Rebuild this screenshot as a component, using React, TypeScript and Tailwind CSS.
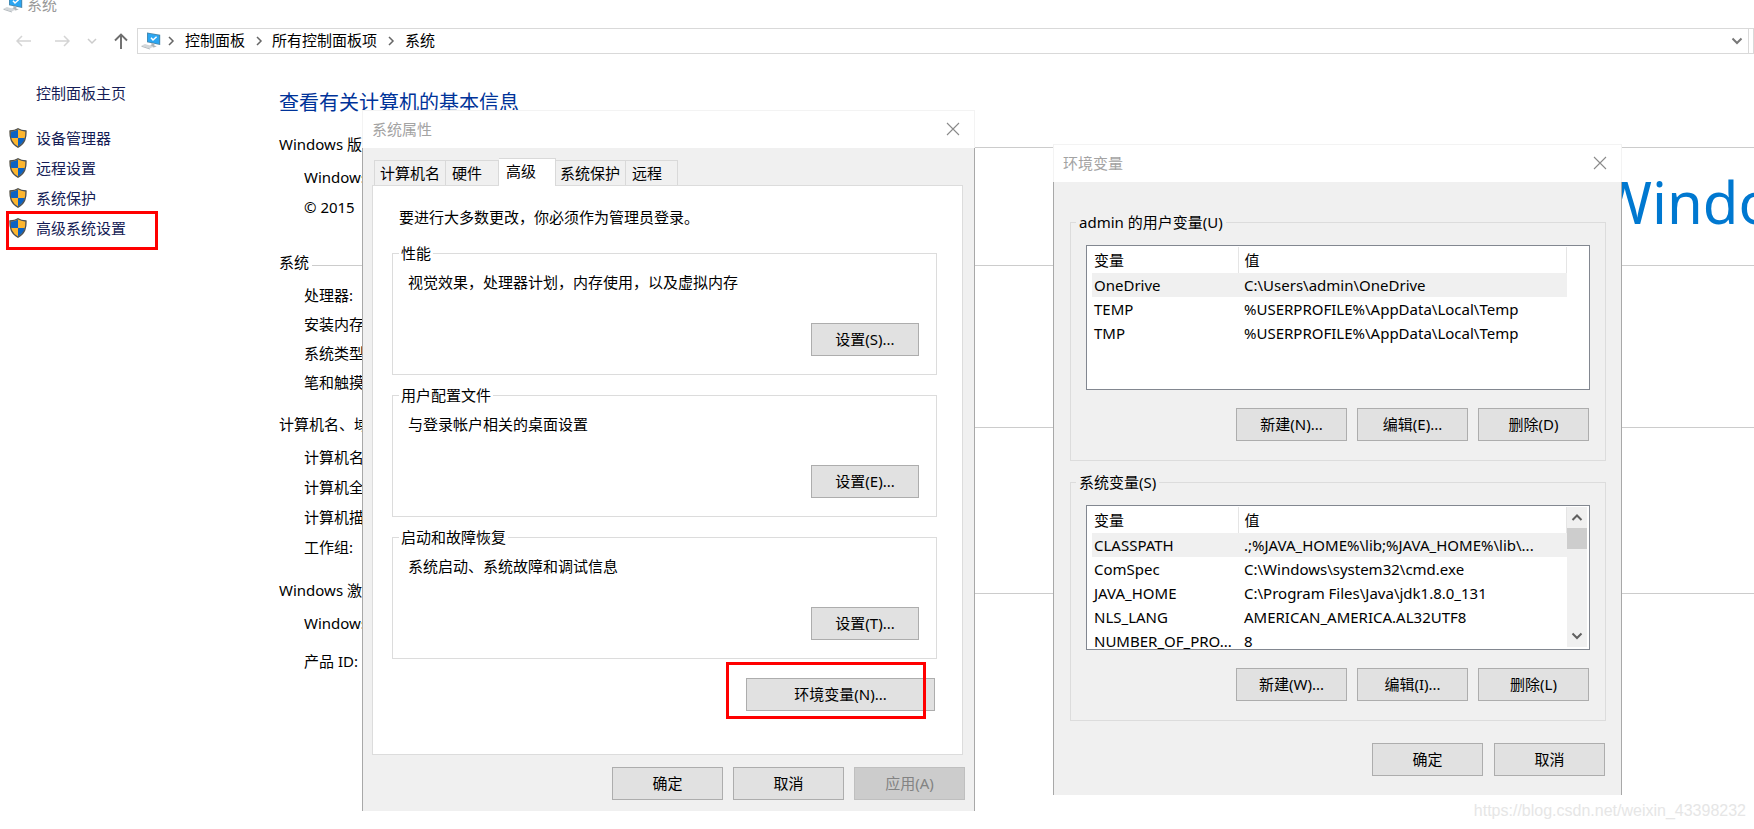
import React from 'react';

interface ButtonProps {
    children: React.ReactNode;
    className?: string;
    disabled?: boolean;
}

const DialogButton: React.FC<ButtonProps> = ({ children, className = 'w-[111px]', disabled = false }) => (
    <button
        type="button"
        disabled={disabled}
        className={`flex h-[33px] shrink-0 items-center justify-center border pb-[2px] ${
            disabled ? 'border-[#bfbfbf] bg-[#cccccc] text-[#838383]' : 'border-[#adadad] bg-[#e1e1e1]'
        } ${className}`}
    >
        {children}
    </button>
);

const ShieldIcon = () => (
    <svg className="h-5 w-[18px] shrink-0" viewBox="0 0 18 20">
        <path d="M9 0.6C6.8 2 4 2.6 0.8 2.8c-.2 7 1 12.6 8.2 16.6c7.2-4 8.4-9.6 8.2-16.6C14 2.6 11.2 2 9 .6z" fill="#fdb62f" />
        <path d="M9 1.4C6.8 2.7 4.2 3.2 1.6 3.4c0 2.4 0 4.600.7 6.600H9z" fill="#0b62c4" />
        <path d="M9 10h6.9c-.8 3.4-2.9 6.2-6.9 8.6z" fill="#0b62c4" />
        <path d="M9 0.8C6.8 2.2 4 2.8 1 3c-.2 7 1 12.2 8 16.2c7-4 8.2-9.2 8-16.2C14 2.8 11.2 2.2 9 .8z" fill="none" stroke="#4a4f55" strokeWidth="1.300" />
    </svg>
);

const ComputerIcon = () => (
    <svg className="h-5 w-5 shrink-0" viewBox="0 0 20 20">
        <path d="M6 1.500l13.200 2.300v10.200L6 11.200z" fill="#4a86a8" />
        <path d="M6.800 2.500l11.400 2v8.400L6.800 10.400z" fill="#2ba6f2" />
        <path d="M10 6.800l2 2.200 3.600-3.200" fill="none" stroke="#fff" strokeWidth="1.500" />
        <path d="M10.500 12l3 .8-.3 1.600 2.600.8-3 1.300-4.800-1.400 2.400-.8z" fill="#aeb4b8" />
        <path d="M0.500 14.800l3.400-1.800 8.600 2.600-3.600 2z" fill="#d3d7da" />
        <path d="M.5 14.800l8.400 2.800v.9L.5 15.700z" fill="#b2b8bc" />
    </svg>
);

const Chevron: React.FC<{ d: string; className?: string; strokeWidth?: number }> = ({ d, className = '', strokeWidth = 1.5 }) => (
    <svg className={`h-3 w-3 shrink-0 ${className}`} viewBox="0 0 12 12" fill="none" stroke="currentColor" strokeWidth={strokeWidth}>
        <path d={d} />
    </svg>
);

const CHEVRON_RIGHT = 'M4 2l4 4-4 4';
const CHEVRON_DOWN = 'M1.500 3.500l4.500 4.500 4.500-4.500';
const CHEVRON_UP = 'M1.500 8l4.500-4.500 4.500 4.500';

const TitleBar: React.FC<{ title: string }> = ({ title }) => (
    <div className="flex h-[38px] items-center justify-between border-x border-t border-[#f3f3f3] bg-white pr-[14px] pb-[2px] pl-[9px] text-[#a3a3a3]">
        <span>{title}</span>
        <button type="button" aria-label="关闭" className="h-[14px] w-[14px]">
            <svg viewBox="0 0 14 14" fill="none" stroke="#8a8a8a" strokeWidth="1.100">
                <path d="M1 1l12 12M13 1L1 13" />
            </svg>
        </button>
    </div>
);

// Sección del fondo: encabezado con línea y filas sangradas
interface Section {
    title: string;
    className: string;
    rowClass: string;
    rows: string[];
}

const sections: Section[] = [
    { title: 'Windows 版本', className: 'mt-[17px] h-[118px]', rowClass: 'mb-[6px]', rows: ['Windows', '© 2015'] },
    { title: '系统', className: 'h-[162px]', rowClass: 'mb-[5px]', rows: ['处理器:', '安装内存', '系统类型', '笔和触摸'] },
    { title: '计算机名、域', className: 'h-[166px]', rowClass: 'mb-[6px]', rows: ['计算机名', '计算机全名', '计算机描述', '工作组:'] },
    { title: 'Windows 激活', className: 'h-[120px]', rowClass: 'mb-[14px]', rows: ['Windows', '产品 ID:'] },
];

const sideLinks = ['设备管理器', '远程设置', '系统保护', '高级系统设置'];

const groups = [
    { title: '性能', text: '视觉效果，处理器计划，内存使用，以及虚拟内存', button: '设置(S)...' },
    { title: '用户配置文件', text: '与登录帐户相关的桌面设置', button: '设置(E)...' },
    { title: '启动和故障恢复', text: '系统启动、系统故障和调试信息', button: '设置(T)...' },
];

const tabs = [
    { label: '计算机名', className: 'w-[72px] pl-[5px]' },
    { label: '硬件', className: 'w-[53px] pl-[6px]' },
    { label: '高级', className: 'w-[57px] pl-[7px]', active: true },
    { label: '系统保护', className: 'w-[70px] pl-1' },
    { label: '远程', className: 'w-[52px] pl-[6px]' },
];

const userVars = [
    ['OneDrive', 'C:\\Users\\admin\\OneDrive'],
    ['TEMP', '%USERPROFILE%\\AppData\\Local\\Temp'],
    ['TMP', '%USERPROFILE%\\AppData\\Local\\Temp'],
];

const systemVars = [
    ['CLASSPATH', '.;%JAVA_HOME%\\lib;%JAVA_HOME%\\lib\\...'],
    ['ComSpec', 'C:\\Windows\\system32\\cmd.exe'],
    ['JAVA_HOME', 'C:\\Program Files\\Java\\jdk1.8.0_131'],
    ['NLS_LANG', 'AMERICAN_AMERICA.AL32UTF8'],
    ['NUMBER_OF_PRO...', '8'],
];

interface VariableGroupProps {
    title: string;
    rows: string[][];
    buttons: string[];
    scroll?: boolean;
}

const VariableGroup: React.FC<VariableGroupProps> = ({ title, rows, buttons, scroll = false }) => (
    <fieldset className="mb-[10px] h-[250px] border border-[#dcdcdc] px-[15px]">
        <legend className="-ml-[10px] px-[3px] leading-[22px]">{title}</legend>
        <div className="mt-3 flex h-[145px] justify-between overflow-hidden border border-[#828790] bg-white p-[2px] pt-px">
            <table className="ml-[3px] w-[475px] table-fixed self-start">
                <thead>
                    <tr className="h-[26px] text-left">
                        <th className="w-[146px] border-r border-[#e5e5e5] pl-[2px] font-normal">变量</th>
                        <th className="border-r border-[#e5e5e5] pl-[6px] font-normal">值</th>
                    </tr>
                </thead>
                <tbody>
                    {rows.map(([name, value], index) => (
                        <tr key={name} className={`h-6 leading-[22px] whitespace-nowrap ${index === 0 ? 'bg-[#f0f0f0]' : ''}`}>
                            <td className="pl-[2px]">{name}</td>
                            <td className="pl-[6px]">{value}</td>
                        </tr>
                    ))}
                </tbody>
            </table>
            {scroll && (
                <div className="flex w-5 flex-col items-center justify-between bg-[#f0f0f0] py-[5px] text-[#606060]">
                    <div className="flex w-full flex-col items-center gap-1">
                        <Chevron d={CHEVRON_UP} strokeWidth={2} />
                        <div className="h-[21px] w-full bg-[#cdcdcd]" />
                    </div>
                    <Chevron d={CHEVRON_DOWN} strokeWidth={2} />
                </div>
            )}
        </div>
        <div className="mt-[18px] flex justify-end gap-[10px] pr-px">
            {buttons.map((label) => (
                <DialogButton key={label}>{label}</DialogButton>
            ))}
        </div>
    </fieldset>
);

const SystemProperties = () => (
    <div className="absolute top-[110px] left-[362px] w-[613px]">
        <TitleBar title="系统属性" />
        <div className="h-[663px] border-x border-[#a8a8a8] bg-[#f0f0f0] px-[9px] pt-[9px]">
            <div className="flex h-[28px] items-end pl-[2px]">
                {tabs.map(({ label, className, active }) => (
                    <button
                        key={label}
                        type="button"
                        className={`relative border-t border-r border-[#d9d9d9] text-left first:border-l ${
                            active ? '-mb-px h-7 bg-white pb-1' : 'h-[25px] pb-px'
                        } ${className}`}
                    >
                        {label}
                    </button>
                ))}
            </div>
            <div className="mr-[2px] h-[570px] border border-[#dcdcdc] bg-white pt-[19px] pr-[25px] pl-[19px]">
                <p className="pl-[7px] leading-6">要进行大多数更改，你必须作为管理员登录。</p>
                <div className="mt-[13px] flex flex-col gap-[9px]">
                    {groups.map(({ title, text, button }) => (
                        <fieldset key={title} className="h-[133px] border border-[#dcdcdc] pr-[17px] pl-[15px]">
                            <legend className="-ml-[9px] px-[2px] leading-[22px]">{title}</legend>
                            <p className="mt-[6px] leading-6">{text}</p>
                            <div className="mt-[29px] flex justify-end">
                                <DialogButton className="w-[108px]">{button}</DialogButton>
                            </div>
                        </fieldset>
                    ))}
                </div>
                <div className="relative mt-[19px] mr-[2px] flex justify-end">
                    <DialogButton className="w-[189px]">环境变量(N)...</DialogButton>
                    <div className="absolute -top-4 right-[9px] h-[57px] w-[200px] border-[3px] border-[#ff0000]" />
                </div>
            </div>
            <div className="mt-3 flex justify-end gap-[10px]">
                <DialogButton>确定</DialogButton>
                <DialogButton>取消</DialogButton>
                <DialogButton disabled>应用(A)</DialogButton>
            </div>
        </div>
    </div>
);

const EnvironmentVariables = () => (
    <div className="absolute top-[144px] left-[1053px] w-[569px]">
        <TitleBar title="环境变量" />
        <div className="h-[613px] border-x border-[#a8a8a8] bg-[#f0f0f0] pt-[29px] pr-[15px] pl-4">
            <VariableGroup title="admin 的用户变量(U)" rows={userVars} buttons={['新建(N)...', '编辑(E)...', '删除(D)']} />
            <VariableGroup title="系统变量(S)" rows={systemVars} buttons={['新建(W)...', '编辑(I)...', '删除(L)']} scroll />
            <div className="mt-[22px] flex justify-end gap-[11px] pr-px">
                <DialogButton>确定</DialogButton>
                <DialogButton>取消</DialogButton>
            </div>
        </div>
    </div>
);

export default function App() {
    return (
        <div className="relative min-h-screen overflow-hidden bg-white font-['Noto_Sans','Noto_Sans_CJK_SC',sans-serif] text-[15px] leading-5 text-black">
            <header>
                <div className="-mt-[6px] flex h-5 items-center gap-1 pl-[3px] text-[#999999]">
                    <ComputerIcon />
                    <span>系统</span>
                </div>
                <nav className="mt-[14px] flex h-[26px] items-center">
                    <svg className="ml-4 h-4 w-4" viewBox="0 0 16 16" fill="none" stroke="#d4d4d4" strokeWidth="1.500">
                        <path d="M15 8H1M6 3L1 8l5 5" />
                    </svg>
                    <svg className="ml-[22px] h-4 w-4" viewBox="0 0 16 16" fill="none" stroke="#d4d4d4" strokeWidth="1.500">
                        <path d="M1 8h14M10 3l5 5-5 5" />
                    </svg>
                    <Chevron d="M2 4l4 4 4-4" className="ml-4 text-[#cccccc]" />
                    <svg className="ml-[15px] h-4 w-4" viewBox="0 0 16 16" fill="none" stroke="#6d6d6d" strokeWidth="1.900">
                        <path d="M8 16V1.500M2 7.500l6-6 6 6" />
                    </svg>
                    <div className="ml-2 flex h-full flex-1 items-center border border-[#d9d9d9] pl-[3px]">
                        <ComputerIcon />
                        <Chevron d={CHEVRON_RIGHT} className="ml-1 text-[#666666]" />
                        <a href="#" className="ml-2 pb-[2px]">控制面板</a>
                        <Chevron d={CHEVRON_RIGHT} className="ml-2 text-[#666666]" />
                        <a href="#" className="ml-[7px] pb-[2px]">所有控制面板项</a>
                        <Chevron d={CHEVRON_RIGHT} className="ml-2 text-[#666666]" />
                        <a href="#" className="ml-2 pb-[2px]">系统</a>
                        <Chevron d={CHEVRON_DOWN} strokeWidth={2} className="mr-[5px] ml-auto text-[#777777]" />
                        <div className="h-full w-[5px] border-l border-[#d9d9d9]" />
                    </div>
                </nav>
            </header>

            <div className="flex">
                <aside className="relative w-[279px] shrink-0 pt-[29px] text-[#151c55]">
                    <a href="#" className="ml-9 block">控制面板主页</a>
                    <ul className="mt-[25px] flex flex-col gap-[10px] pl-[9px]">
                        {sideLinks.map((label) => (
                            <li key={label}>
                                <a href="#" className="flex items-center gap-[9px]">
                                    <ShieldIcon />
                                    {label}
                                </a>
                            </li>
                        ))}
                    </ul>
                    <div className="absolute top-[157px] left-[6px] h-[39px] w-[152px] border-[3px] border-[#ff0000]" />
                </aside>
                <main className="flex-1 pt-[35px]">
                    <h1 className="text-xl leading-7 text-[#003399]">查看有关计算机的基本信息</h1>
                    {sections.map(({ title, className, rowClass, rows }) => (
                        <section key={title} className={className}>
                            <div className="flex items-center gap-[3px]">
                                <h2>{title}</h2>
                                <div className="mt-[6px] h-px flex-1 bg-[#cccccc]" />
                            </div>
                            <ul className="mt-[11px] pl-[25px] leading-6">
                                {rows.map((row) => (
                                    <li key={row} className={rowClass}>{row}</li>
                                ))}
                            </ul>
                        </section>
                    ))}
                </main>
            </div>

            <div className="absolute top-[163px] left-[1598px] text-[58px] leading-[78px] whitespace-nowrap text-[#0078d0]">Windows</div>
            <SystemProperties />
            <EnvironmentVariables />
            <div className="absolute right-[8px] bottom-2 font-['Liberation_Sans',sans-serif] text-base leading-5 text-[#e6e6e6]">
                https://blog.csdn.net/weixin_43398232
            </div>
        </div>
    );
}
